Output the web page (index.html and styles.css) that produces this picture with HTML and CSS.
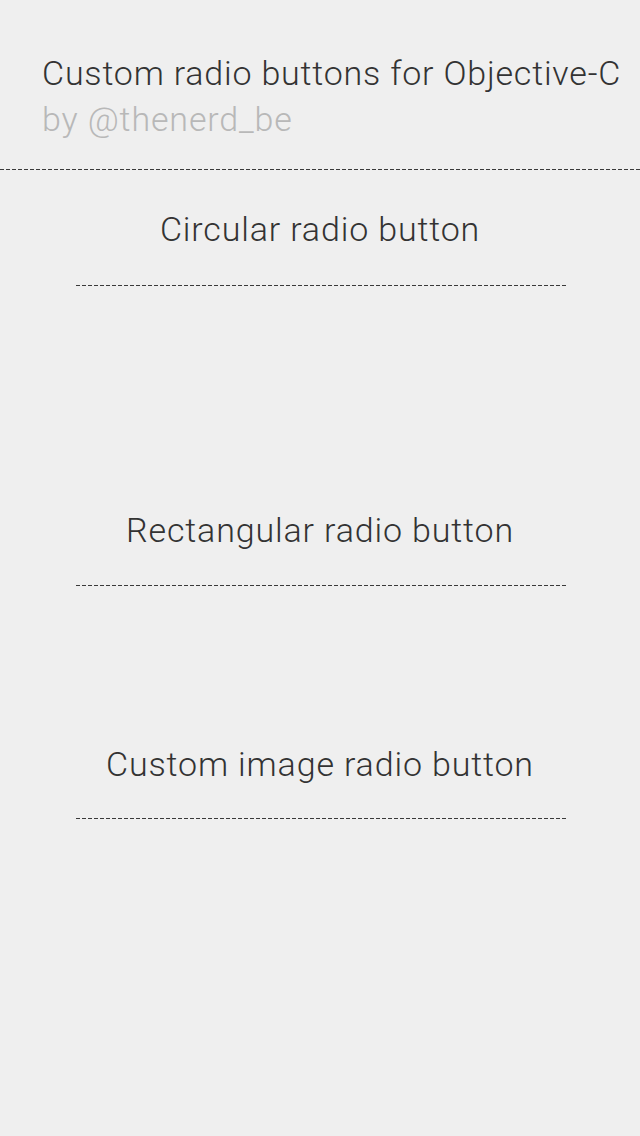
FILE: index.html
```html
<!DOCTYPE html>
<html>
<head>
<meta charset="utf-8">
<link rel="stylesheet" href="styles.css">
</head>
<body>
  <header class="header">
    <h1 class="title">Custom radio buttons for Objective-C</h1>
    <p class="subtitle">by @thenerd_be</p>
  </header>
  <main class="content">
    <section class="group group-circular">
      <h2 class="group-title">Circular radio button</h2>
      <div class="divider"></div>
      <div class="radios"></div>
    </section>
    <section class="group group-rect">
      <h2 class="group-title">Rectangular radio button</h2>
      <div class="divider"></div>
      <div class="radios"></div>
    </section>
    <section class="group group-image">
      <h2 class="group-title">Custom image radio button</h2>
      <div class="divider"></div>
      <div class="radios"></div>
    </section>
  </main>
</body>
</html>
```
FILE: styles.css
```css
html, body {
  margin: 0;
  padding: 0;
  background: #efefef;
}
body {
  width: 640px;
  height: 1136px;
  overflow: hidden;
  font-family: Roboto, "Liberation Sans", sans-serif;
  color: #333333;
}
.header {
  padding: 53px 0 31px 42px;
  border-bottom: 1px solid transparent;
  background-image: repeating-linear-gradient(to right, #3a3a3a 0 4px, transparent 4px 6px);
  background-size: 100% 1px;
  background-position: left bottom;
  background-repeat: no-repeat;
}
.title {
  margin: 0;
  font-size: 34px;
  line-height: 40px;
  font-weight: 300;
  letter-spacing: 0.8px;
  color: #333333;
  white-space: nowrap;
}
.subtitle {
  margin: 6px 0 0;
  font-size: 34px;
  line-height: 40px;
  font-weight: 300;
  letter-spacing: 0.85px;
  color: #b8b8b8;
}
.content {
  display: flex;
  flex-direction: column;
}
.group {
  display: flex;
  flex-direction: column;
  align-items: center;
}
.group-title {
  margin: 0;
  font-size: 34px;
  line-height: 40px;
  font-weight: 300;
  letter-spacing: 0.85px;
  color: #333333;
  text-align: center;
}
.group-circular { padding-top: 38px; }
.divider {
  width: 490px;
  height: 1px;
  margin: 35px 0 0 2px;
  background: repeating-linear-gradient(to right, #3a3a3a 0 4px, transparent 4px 6px);
}
.group-circular .divider { margin-top: 36px; }
.group-image .divider { margin-top: 34px; }
.group-circular .radios { height: 224px; }
.group-rect .radios { height: 158px; }
.group-image .radios { height: 300px; }
```
